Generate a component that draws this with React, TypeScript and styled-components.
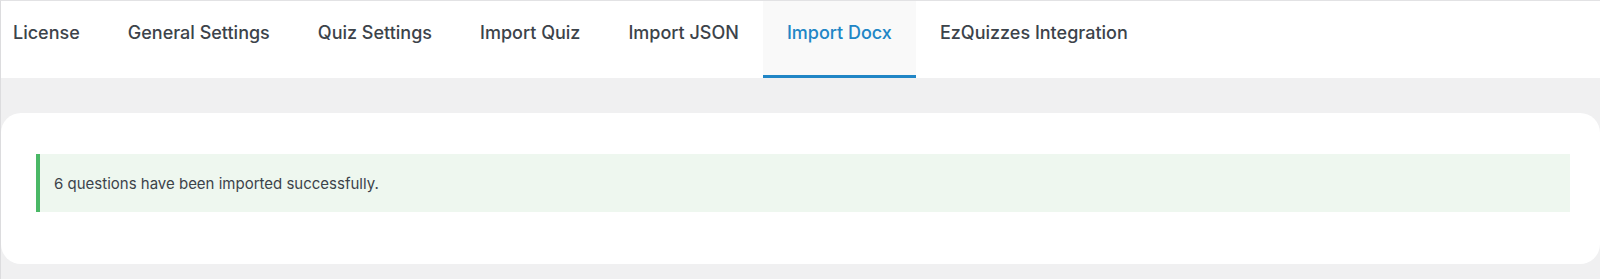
import React from "react";
import styled, { createGlobalStyle } from "styled-components";

const tabs = [
  "License",
  "General Settings",
  "Quiz Settings",
  "Import Quiz",
  "Import JSON",
  "Import Docx",
  "EzQuizzes Integration",
];

function App() {
  const active = "Import Docx";
  return (
    <>
      <GlobalStyle />
      <Wrapper>
        <TabBar>
          {tabs.map((t) => (
            <Tab key={t} $active={t === active}>
              {t}
            </Tab>
          ))}
        </TabBar>
        <Main>
          <Card>
            <Notice>6 questions have been imported successfully.</Notice>
          </Card>
        </Main>
      </Wrapper>
    </>
  );
}

export default App;

const GlobalStyle = createGlobalStyle`
  body {
    margin: 0;
    background: #f0f0f1;
    font-family: Inter, "Liberation Sans", sans-serif;
  }
`;

const Wrapper = styled.div`
  border-top: 1px solid #e2e2e4;
  border-left: 1px solid #dcdcde;
  min-height: 278px;
`;

const TabBar = styled.nav`
  display: flex;
  height: 77px;
  background: #fff;
`;

const Tab = styled.a<{ $active?: boolean }>`
  display: block;
  padding: 20px 24px 0;
  line-height: 24px;
  font-size: 18px;
  font-weight: 500;
  color: ${(p) => (p.$active ? "#2186c6" : "#3c434a")};
  background: ${(p) => (p.$active ? "#f9f9f9" : "transparent")};
  box-shadow: ${(p) => (p.$active ? "inset 0 -3px 0 #2186c6" : "none")};
  cursor: pointer;

  &:first-child {
    padding-left: 12px;
  }
`;

const Main = styled.main`
  padding: 35px 0 15px;
`;

const Card = styled.section`
  background: #fff;
  border-radius: 20px;
  padding: 41px 30px 52px 35px;
`;

const Notice = styled.div`
  display: flex;
  align-items: center;
  height: 58px;
  padding: 0 14px;
  background: #eef7ef;
  border-left: 4px solid #4ab866;
  font-size: 15px;
  color: #3c434a;
`;
